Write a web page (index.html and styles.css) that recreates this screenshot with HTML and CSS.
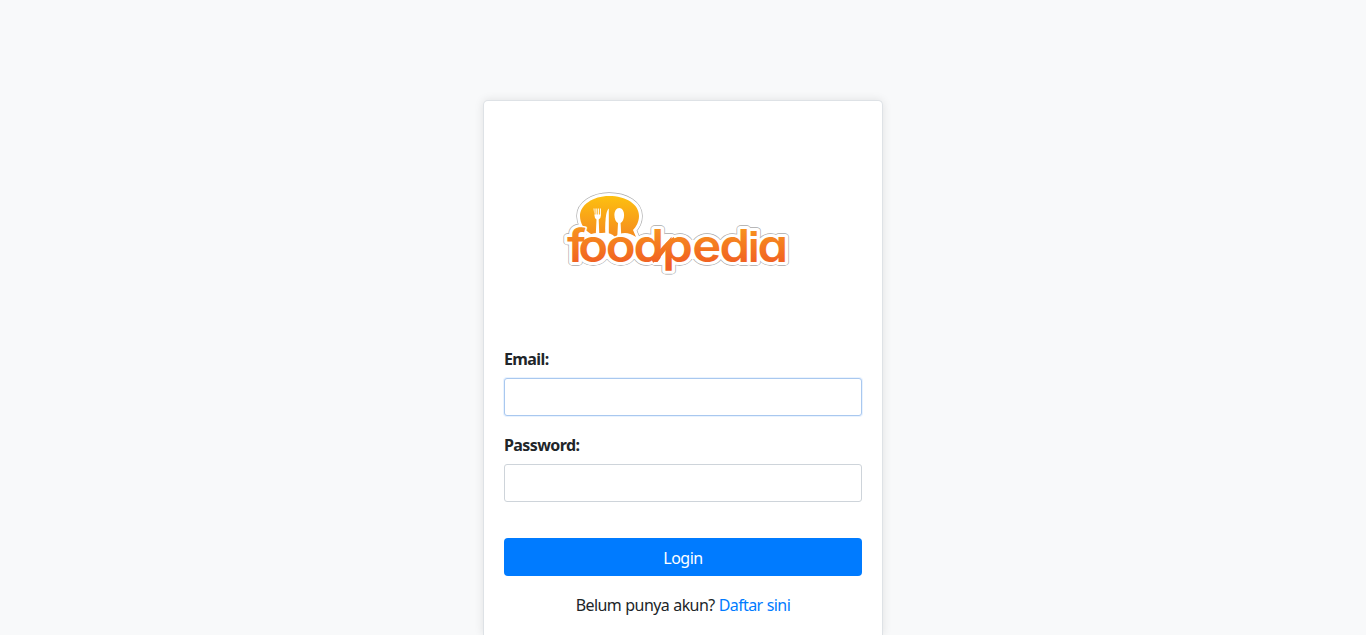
FILE: index.html
```html
<!DOCTYPE html>
<html lang="id">
<head>
<meta charset="utf-8">
<title>Login</title>
<link rel="stylesheet" href="styles.css">
</head>
<body>
<main class="card">
  <svg class="logo" viewBox="0 0 358 238" role="img" aria-label="foodpedia">
    <defs>
      <linearGradient id="bubble" x1="0" y1="0" x2="0" y2="1">
        <stop offset="0" stop-color="#fdc010"/><stop offset="1" stop-color="#f58b1f"/>
      </linearGradient>
      <linearGradient id="word" gradientUnits="userSpaceOnUse" x1="0" y1="107" x2="0" y2="143">
        <stop offset="0" stop-color="#f7931e"/><stop offset="1" stop-color="#f15f22"/>
      </linearGradient>
      <path id="balloon" d="M105 75C122 75 135 83 135 95C135 101 132 106 129 109L132 116Q126 112 121 112Q115 112 111 116Q106 111 98 112Q91 112 87 113C80 109 76 102 76 95C76 84 89 75 105 75Z"/>
      <text id="name" class="wordmark" transform="scale(1.09 1)" y="141" x="57.700 68.200 93.300 118.900 145.200 172.600 197.700 223.700 232.500">foodped<tspan class="short">i</tspan>a</text>
    </defs>
    <g class="edge"><use href="#balloon"/><use href="#name"/></g>
    <g class="rim"><use href="#balloon"/><use href="#name"/></g>
    <path d="M78 119H281V138H78Z" fill="#fff"/>
    <use href="#balloon" fill="url(#bubble)"/>
    <g fill="#fff">
      <path d="M89.500 87.500h1v6h1v-6h1.200v6h1v-6h1.200v6h1v-6h1v7q0 3-2.200 4l.6 15h-3.500l.7-15q-2-1-2-4z"/>
      <path d="M104.800 87.500V114h-3.500q-.5-13 1-21 1-4.500 2.500-5.500z"/>
      <path d="M115.200 87c3 0 4.900 3.300 4.900 7 0 4-1.600 7-3.500 8l.7 13h-4l.7-13c-2-1-3.600-4-3.600-8 0-3.700 1.900-7 4.800-7z"/>
    </g>
    <path d="M86 113.500Q98 110 108 116H114Q122 110 131 116V122H86Z" fill="#fff"/>
    <use class="gap" href="#name"/>
    <use href="#name" fill="url(#word)"/>
    <path d="M152 143H161V131ZM158.600 114V126L169 114Z" fill="#fff"/>
    <path d="M148 139.500Q153 137 158 130T171 118" fill="none" stroke="url(#word)" stroke-width="5"/>
  </svg>
  <form class="form">
    <label class="label" for="email">Email:</label>
    <input class="field field-active" id="email" type="email">
    <label class="label label-password" for="password">Password:</label>
    <input class="field" id="password" type="password">
    <button class="submit" type="button">Login</button>
  </form>
  <p class="register">Belum punya akun? <a class="link" href="#">Daftar sini</a></p>
</main>
</body>
</html>
```
FILE: styles.css
```css
* { box-sizing: border-box; }
body {
  margin: 0;
  height: 635px;
  overflow: hidden;
  padding-top: 100px;
  background: #f8f9fa;
  color: #212529;
  font: 16px/24px "Noto Sans", "Open Sans", sans-serif;
}
.card {
  width: 400px;
  height: 535px;
  margin: 0 auto;
  padding: 20px 20px 0;
  background: #fff;
  border: 1px solid #dee2e6;
  border-bottom: 0;
  border-radius: 5px 5px 0 0;
  box-shadow: 0 0 10px rgba(0, 0, 0, .1);
}
.logo { display: block; width: 358px; height: 238px; }
.wordmark {
  font-family: Inter, sans-serif;
  font-size: 45px;
  font-weight: 600;
  font-feature-settings: "cv11" 1, "ss07" 1;
}
.short { font-size: 42px; }
.edge { fill: #aaa; stroke: #aaa; stroke-width: 7.400px; stroke-linejoin: round; }
.rim { fill: #fff; stroke: #fff; stroke-width: 6.200px; stroke-linejoin: round; }
.gap { fill: #fff; stroke: #fff; stroke-width: 3px; stroke-linejoin: round; }
.form { display: flex; flex-direction: column; margin-top: -12px; }
.label { height: 24px; margin-bottom: 7px; font-weight: 700; letter-spacing: -.6px; }
.label-password { margin-top: 17px; }
.field {
  height: 38px;
  padding: 6px 12px;
  background: #fff;
  border: 1px solid #ced4da;
  border-radius: 3px;
  outline: 0;
}
.field-active { border-color: #a9c8ef; box-shadow: 0 0 0 1px #e9f3ff; }
.submit {
  height: 38px;
  margin-top: 36px;
  padding: 2px 0 0;
  background: #007bff;
  border: 0;
  border-radius: 4px;
  color: #fff;
  font: inherit;
  letter-spacing: -.5px;
}
.register { margin: 17px 0 0; text-align: center; white-space: nowrap; letter-spacing: -.6px; word-spacing: .6px; }
.link { color: #007bff; text-decoration: none; }
```
